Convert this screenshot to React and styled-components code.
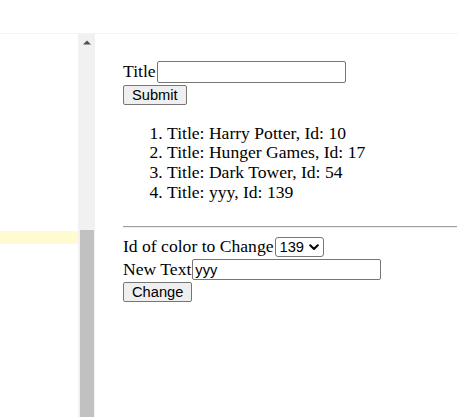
import React from "react";
import styled, { createGlobalStyle } from "styled-components";

const Global = createGlobalStyle`
  html, body, #root { margin: 0; padding: 0; height: 100%; }
  body { overflow: hidden; background: #fff; color: #000; }
`;

const Page = styled.div`
  display: flex;
  flex-direction: column;
  height: 100vh;
`;

const TopBar = styled.div`
  height: 33px;
  flex: none;
  border-bottom: 1px solid #f3f3f3;
  background: #fff;
`;

const Main = styled.div`
  flex: 1;
  display: flex;
  min-height: 0;
`;

const LeftPane = styled.div`
  width: 78px;
  flex: none;
  padding-top: 197px;
  background: #fff;
`;

const Highlight = styled.div`
  height: 13px;
  background: #fffad0;
`;

const ScrollBar = styled.div`
  width: 17px;
  flex: none;
  display: flex;
  flex-direction: column;
  background: #f1f1f1;
`;

const ArrowButton = styled.div`
  height: 17px;
  display: flex;
  align-items: center;
  justify-content: center;
`;

const Track = styled.div`
  flex: 1;
  display: flex;
  flex-direction: column;
  padding-top: 179px;
`;

const Thumb = styled.div`
  flex: 1;
  margin: 0 1px 0 2px;
  background: #c1c1c1;
`;

const RightPane = styled.div`
  flex: 1;
  padding: 27px 1px 0 28px;
  font-family: "Liberation Serif", "Times New Roman", serif;
  font-size: 17.6px;
  line-height: 20px;
`;

const FieldRow = styled.div`
  display: flex;
  align-items: baseline;
  margin-top: ${(p) => p.$gap || 0}px;
`;

const Label = styled.span`
  line-height: 18px;
  white-space: nowrap;
`;

const TextInput = styled.input`
  box-sizing: border-box;
  width: 189px;
  height: ${(p) => p.$h || 22}px;
  margin: 0 0 0 1px;
  padding: 0 2px;
  border: 1px solid #767676;
  border-radius: 2px;
  font-family: "Liberation Sans", Arial, sans-serif;
  font-size: 14.67px;
  color: #000;
  background: #fff;
  outline: none;
`;

const Button = styled.button`
  display: block;
  box-sizing: border-box;
  height: 20px;
  margin: 2px 0 0;
  padding: 0 8px;
  border: 1px solid #767676;
  border-radius: 2px;
  background: #efefef;
  font-family: "Liberation Sans", Arial, sans-serif;
  font-size: 14.67px;
  line-height: 18px;
  color: #000;
`;

const List = styled.ol`
  margin: 18.5px 0 0;
  padding-left: 44px;
  line-height: 19.7px;
`;

const Rule = styled.hr`
  margin: 24px 0 0;
  height: 0;
  border: none;
  border-top: 1px solid #a0a0a0;
  border-bottom: 1px solid #eeeeee;
`;

const SelectWrap = styled.span`
  position: relative;
  display: inline-flex;
  margin-left: 2px;
`;

const Select = styled.select`
  appearance: none;
  box-sizing: border-box;
  width: 49px;
  height: 20px;
  margin: 0;
  padding: 0 0 0 3px;
  border: 1px solid #767676;
  border-radius: 3px;
  background: #fff;
  font-family: "Liberation Sans", Arial, sans-serif;
  font-size: 14.67px;
  color: #000;
  outline: none;
`;

const Chevron = styled.svg`
  position: absolute;
  right: 5px;
  top: 7px;
  pointer-events: none;
`;

const books = [
  { title: "Harry Potter", id: 10 },
  { title: "Hunger Games", id: 17 },
  { title: "Dark Tower", id: 54 },
  { title: "yyy", id: 139 },
];

export default function App() {
  return (
    <Page>
      <Global />
      <TopBar />
      <Main>
        <LeftPane>
          <Highlight />
        </LeftPane>
        <ScrollBar>
          <ArrowButton>
            <svg width="8" height="5" viewBox="0 0 8 5">
              <path d="M0 4.5 L4 0.5 L8 4.5 Z" fill="#505050" />
            </svg>
          </ArrowButton>
          <Track>
            <Thumb />
          </Track>
        </ScrollBar>
        <RightPane>
          <FieldRow>
            <Label>Title</Label>
            <TextInput defaultValue="" />
          </FieldRow>
          <Button>Submit</Button>
          <List>
            {books.map((b) => (
              <li key={b.id}>
                Title: {b.title}, Id: {b.id}
              </li>
            ))}
          </List>
          <Rule />
          <FieldRow $gap={9}>
            <Label>Id of color to Change</Label>
            <SelectWrap>
              <Select defaultValue="139">
                {books.map((b) => (
                  <option key={b.id} value={b.id}>
                    {b.id}
                  </option>
                ))}
              </Select>
              <Chevron width="10" height="7" viewBox="0 0 10 7">
                <path
                  d="M1.2 1.3 L5 5 L8.8 1.3"
                  fill="none"
                  stroke="#000"
                  strokeWidth="2"
                  strokeLinecap="round"
                  strokeLinejoin="round"
                />
              </Chevron>
            </SelectWrap>
          </FieldRow>
          <FieldRow $gap={2}>
            <Label>New Text</Label>
            <TextInput $h={21} defaultValue="yyy" />
          </FieldRow>
          <Button>Change</Button>
        </RightPane>
      </Main>
    </Page>
  );
}
